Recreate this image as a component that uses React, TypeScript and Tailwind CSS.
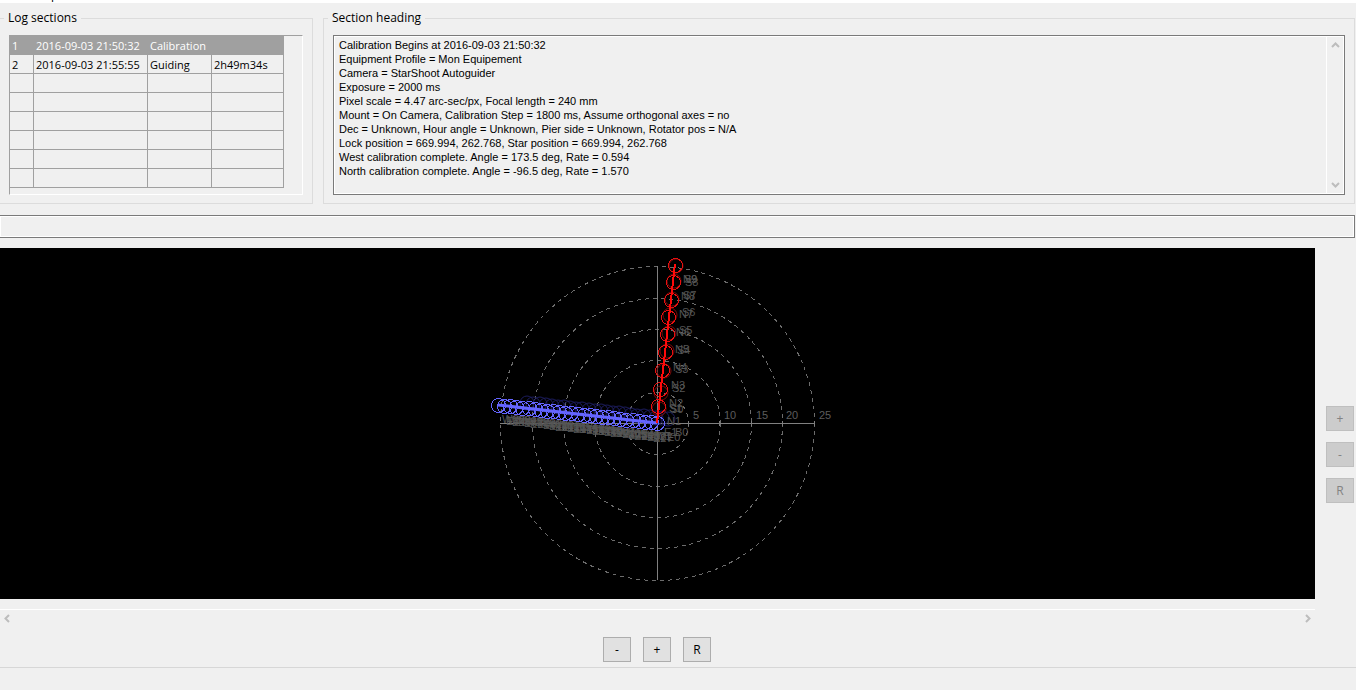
import React from "react";

type Section = { id: string; time: string; kind: string; length: string };

const SECTIONS: Section[] = [
  { id: "1", time: "2016-09-03 21:50:32", kind: "Calibration", length: "" },
  { id: "2", time: "2016-09-03 21:55:55", kind: "Guiding", length: "2h49m34s" },
];

const EMPTY_ROWS = [0, 1, 2, 3, 4, 5];

const HEADING = `Calibration Begins at 2016-09-03 21:50:32
Equipment Profile = Mon Equipement
Camera = StarShoot Autoguider
Exposure = 2000 ms
Pixel scale = 4.47 arc-sec/px, Focal length = 240 mm
Mount = On Camera, Calibration Step = 1800 ms, Assume orthogonal axes = no
Dec = Unknown, Hour angle = Unknown, Pier side = Unknown, Rotator pos = N/A
Lock position = 669.994, 262.768, Star position = 669.994, 262.768
West calibration complete. Angle = 173.5 deg, Rate = 0.594
North calibration complete. Angle = -96.5 deg, Rate = 1.570`;

const CX = 657;
const CY = 175;

const NORTH = [
  [675, 17], [673, 34], [671, 52], [668, 69], [667, 86],
  [665, 104], [662, 122], [660, 141], [658, 158],
];
const SOUTH = [
  [676, 18], [674, 33], [672, 51], [670, 67], [669, 85],
  [667, 103], [664, 123], [661, 145], [659, 161],
];

const WEST_STEPS = 27;
const WEST = Array.from({ length: WEST_STEPS }, (_, i) => [
  Math.round(CX - (i * 159) / (WEST_STEPS - 1)),
  Math.round(CY - (i * 18) / (WEST_STEPS - 1)),
]);

const POINT_LABELS: [string, number, number][] = [
  ["N9", 683, 35], ["S9", 684, 35], ["S8", 685, 38],
  ["N8", 681, 52], ["S7", 683, 51],
  ["N7", 679, 70], ["S6", 682, 68],
  ["N6", 676, 88], ["S5", 679, 86],
  ["N5", 675, 105], ["S4", 677, 106],
  ["N4", 673, 123], ["S3", 675, 125],
  ["N3", 671, 141], ["S2", 672, 144],
  ["N2", 669, 159], ["S1", 669, 164], ["S0", 670, 165],
  ["N1", 667, 177], ["E1", 664, 188], ["E0", 667, 193], ["B0", 675, 188],
];

function Calibration() {
  return (
    <svg
      className="block shrink-0"
      width="1315"
      height="351"
      viewBox="0 0 1315 351"
      role="img"
      aria-label="Calibration steps"
      fontFamily="'Liberation Sans', Arial, sans-serif"
      fontSize="11"
    >
      <g fill="none" stroke="#6c6c6c" strokeDasharray="4 4" shapeRendering="crispEdges">
        {[31, 63, 94, 125, 157].map((r) => (
          <circle key={r} cx={CX + 0.5} cy={CY + 0.5} r={r} />
        ))}
      </g>
      <g stroke="#808080" shapeRendering="crispEdges">
        <path d="M500 175.5H815M657.5 18V332" />
        <path d="M688.5 173v5M719.5 173v5M751.5 173v5M782.5 173v5M814.5 173v5" />
      </g>
      <g fill="#5c5c5c">
        <text x="693" y="171">5</text>
        <text x="724" y="171">10</text>
        <text x="756" y="171">15</text>
        <text x="786" y="171">20</text>
        <text x="819" y="171">25</text>
      </g>
      <g fill="none" stroke="#1c1c5c">
        {WEST.slice(0, 24).map(([x, y]) => (
          <circle key={x} cx={x + 11} cy={y - 4} r="7" />
        ))}
      </g>
      <g fill="none" stroke="#7a0a0a">
        {SOUTH.map(([x, y]) => (
          <circle key={y} cx={x} cy={y} r="7" />
        ))}
      </g>
      <g fill="#555555">
        {POINT_LABELS.map(([t, x, y]) => (
          <text key={t} x={x} y={y}>{t}</text>
        ))}
        {WEST.slice(1).map(([x, y], i) => (
          <text key={i} x={x + 4} y={y + 18}>{`W${i + 1}`}</text>
        ))}
        {WEST.slice(2).map(([x, y], i) => (
          <text key={i} x={x + 8} y={y + 20}>{`E${WEST_STEPS - i}`}</text>
        ))}
      </g>
      <g fill="none" stroke="#6464ff" shapeRendering="crispEdges">
        {WEST.map(([x, y]) => (
          <circle key={x} cx={x + 0.5} cy={y + 0.5} r="7" />
        ))}
      </g>
      <path d="M498 157L657 175" stroke="#6464ff" strokeWidth="3" />
      <g fill="none" stroke="#e81010" shapeRendering="crispEdges">
        {NORTH.map(([x, y]) => (
          <circle key={y} cx={x + 0.5} cy={y + 0.5} r="7" />
        ))}
      </g>
      <path d="M657 175L675 16" stroke="#ff0a0a" strokeWidth="2" shapeRendering="crispEdges" />
    </svg>
  );
}

function Chevron({ turn }: { turn: string }) {
  return (
    <svg className={`block ${turn}`} width="9" height="9" viewBox="0 0 9 9" aria-hidden="true">
      <path d="M1 6L4.500 2.500L8 6" fill="none" stroke="#bdbdbd" strokeWidth="2" />
    </svg>
  );
}

function Group({ title, className, children }: { title: string; className: string; children: React.ReactNode }) {
  return (
    <fieldset className={`min-w-0 border border-[#dcdcdc] pb-2 ${className}`}>
      <legend className="px-1 leading-4">{title}</legend>
      {children}
    </fieldset>
  );
}

const CELL = "border border-[#a0a0a0] px-[2px] pt-px pb-0 whitespace-nowrap";

export default function App() {
  return (
    <div className="flex min-h-screen flex-col bg-[#f0f0f0] font-['Open_Sans','Noto_Sans',sans-serif] text-[12px] text-black">
      <div className="flex h-[3px] items-end overflow-hidden bg-white pl-[51px] leading-4">p</div>

      <div className="flex gap-[10px] pt-[7px] pr-px">
        <Group title="Log sections" className="w-[313px] shrink-0 border-l-0 pl-1">
          <div className="mt-[9px] ml-[5px] mr-[9px] h-[160px] border-t border-l border-r border-b border-t-[#a0a0a0] border-l-[#a0a0a0] border-r-white border-b-white">
            <table className="-mt-px -ml-px w-[275px] table-fixed border-collapse text-[11px] leading-[17px]">
              <colgroup>
                <col className="w-[24px]" />
                <col className="w-[114px]" />
                <col className="w-[64px]" />
                <col className="w-[72px]" />
              </colgroup>
              <tbody>
                {SECTIONS.map((s, i) => (
                  <tr key={s.id} className={i === 0 ? "h-[19px] bg-[#a0a0a0] text-white" : "h-[19px]"}>
                    <td className={CELL}>{s.id}</td>
                    <td className={CELL}>{s.time}</td>
                    <td className={CELL}>{s.kind}</td>
                    <td className={CELL}>{s.length}</td>
                  </tr>
                ))}
                {EMPTY_ROWS.map((r) => (
                  <tr key={r} className="h-[19px]">
                    <td className={CELL} />
                    <td className={CELL} />
                    <td className={CELL} />
                    <td className={CELL} />
                  </tr>
                ))}
              </tbody>
            </table>
          </div>
        </Group>

        <Group title="Section heading" className="flex-1 pl-1">
          <div className="mt-[9px] ml-[5px] mr-[9px] flex h-[160px] border border-[#7a7a7a] bg-white p-px">
            <textarea
              readOnly
              aria-label="Section heading"
              className="block flex-1 resize-none overflow-hidden bg-[#f0f0f0] px-1 py-px font-['Liberation_Sans',Arial,sans-serif] text-[11px] leading-[14px] outline-none"
              value={HEADING}
            />
            <div className="ml-px flex w-[16px] flex-col items-center justify-between bg-[#f0f0f0] py-1">
              <Chevron turn="rotate-0" />
              <Chevron turn="rotate-180" />
            </div>
          </div>
        </Group>
      </div>

      <div className="pt-[11px] pr-px">
        <input
          readOnly
          aria-label="Status"
          className="block h-[23px] w-full border border-l-0 border-[#7a7a7a] bg-[#f0f0f0] shadow-[inset_0_0_0_1px_#ffffff] outline-none"
        />
      </div>

      <div className="flex pt-[10px]">
        <div className="flex min-w-0 flex-1 justify-center overflow-hidden bg-black">
          <Calibration />
        </div>
        <div className="flex w-[41px] shrink-0 flex-col items-end justify-end gap-[11px] pr-[2px] pb-[96px]">
          {["+", "-", "R"].map((t) => (
            <button key={t} disabled className="h-[25px] w-[28px] border border-[#bfbfbf] bg-[#cccccc] text-[#838383]">
              {t}
            </button>
          ))}
        </div>
      </div>

      <div className="mt-[10px] mr-[41px] flex h-[17px] items-center justify-between border-t border-white px-[3px]">
        <Chevron turn="-rotate-90" />
        <Chevron turn="rotate-90" />
      </div>

      <div className="mt-[11px] flex justify-center gap-[12px] pr-[42px]">
        {["-", "+", "R"].map((t) => (
          <button key={t} className="h-[25px] w-[28px] border border-[#adadad] bg-[#e1e1e1]">
            {t}
          </button>
        ))}
      </div>

      <div className="mt-[5px] flex-1 border-t border-[#d7d7d7]" />
    </div>
  );
}
